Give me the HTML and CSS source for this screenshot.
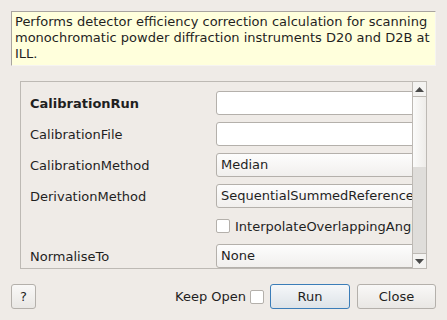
FILE: index.html
```
<!DOCTYPE html>
<html>
<head>
<meta charset="utf-8">
<link rel="stylesheet" href="styles.css">
</head>
<body>
<div class="dialog">
  <div class="desc">Performs detector efficiency correction calculation for scanning monochromatic powder diffraction instruments D20 and D2B at ILL.</div>
  <div class="scroll">
    <div class="viewport">
      <div class="form">
        <div class="label bold">CalibrationRun</div>
        <div class="field input"></div>
        <div class="label">CalibrationFile</div>
        <div class="field input"></div>
        <div class="label">CalibrationMethod</div>
        <div class="field combo">Median</div>
        <div class="label">DerivationMethod</div>
        <div class="field combo">SequentialSummedReferenceDetector</div>
        <div class="label"></div>
        <div class="checkrow"><span class="check"></span><span>InterpolateOverlappingAngles</span></div>
        <div class="label">NormaliseTo</div>
        <div class="field combo">None</div>
      </div>
    </div>
    <div class="vscroll">
      <div class="sbtn up"><svg width="9" height="5" viewBox="0 0 9 5"><polygon points="0,5 9,5 4.5,0" fill="#4a4a4a"/></svg></div>
      <div class="handle"></div>
      <div class="track"></div>
      <div class="sbtn down"><svg width="9" height="5" viewBox="0 0 9 5"><polygon points="0,0 9,0 4.5,5" fill="#4a4a4a"/></svg></div>
    </div>
  </div>
  <div class="buttons">
    <div class="btn help">?</div>
    <div class="spacer"></div>
    <span class="keep">Keep Open</span>
    <span class="check keepcheck"></span>
    <div class="btn run">Run</div>
    <div class="btn close">Close</div>
  </div>
</div>
</body>
</html>
```
FILE: styles.css
```
html, body {
  margin: 0;
  padding: 0;
}
body {
  width: 447px;
  height: 320px;
  overflow: hidden;
  background: #efebe7;
  font-family: "DejaVu Sans", sans-serif;
  font-size: 13px;
  color: #1f1f1f;
}
.dialog {
  display: flex;
  flex-direction: column;
  height: 320px;
}
.desc {
  box-sizing: border-box;
  margin: 11px 11px 0 11px;
  height: 55px;
  padding: 2px 3px 0 3px;
  line-height: 16px;
  background: #ffffdc;
  border-top: 1px solid #a8a49f;
  border-left: 1px solid #a8a49f;
  border-right: 1px solid #f6f4f1;
  border-bottom: 1px solid #f6f4f1;
}
.scroll {
  box-sizing: border-box;
  margin: 15px 20px 0 20px;
  height: 188px;
  border: 1px solid #bdb9b4;
  display: flex;
}
.viewport {
  flex: 1;
  overflow: hidden;
}
.form {
  display: grid;
  grid-template-columns: 186px 240px;
  grid-template-rows: 24px 24px 24px 24px 22px 24px;
  row-gap: 7px;
  padding: 9px 0 0 9px;
  align-items: center;
}
.label {
  white-space: nowrap;
}
.bold {
  font-weight: bold;
}
.field {
  box-sizing: border-box;
  height: 24px;
  border: 1px solid #b4b0ab;
  border-radius: 3px;
  white-space: nowrap;
  overflow: hidden;
  padding-left: 4px;
  line-height: 22px;
}
.input {
  background: #ffffff;
}
.combo {
  background: linear-gradient(#fdfdfd, #f1efed);
}
.checkrow {
  display: flex;
  align-items: center;
  gap: 5px;
  white-space: nowrap;
}
.check {
  box-sizing: border-box;
  display: inline-block;
  width: 14px;
  height: 14px;
  border: 1px solid #b4b0ab;
  border-radius: 2px;
  background: #ffffff;
  flex: none;
}
.vscroll {
  box-sizing: border-box;
  width: 14px;
  border-left: 1px solid #bdb9b4;
  display: flex;
  flex-direction: column;
}
.sbtn {
  height: 14px;
  flex: none;
  background: #f4f3f1;
  display: flex;
  align-items: center;
  justify-content: center;
}
.up {
  border-bottom: 1px solid #bdb9b4;
}
.down {
  border-top: 1px solid #bdb9b4;
}
.handle {
  height: 70px;
  flex: none;
  background: linear-gradient(90deg, #fbfbfa, #eeece9);
}
.track {
  flex: 1;
  background: #dfddda;
}
.buttons {
  display: flex;
  align-items: center;
  margin: 15px 11px 0 11px;
  height: 25px;
}
.spacer {
  flex: 1;
}
.btn {
  box-sizing: border-box;
  height: 25px;
  border: 1px solid #b4b0ab;
  border-radius: 3px;
  background: linear-gradient(#f9f8f7, #e9e7e4);
  display: flex;
  align-items: center;
  justify-content: center;
}
.help {
  width: 25px;
}
.keep {
  margin-right: 4px;
}
.keepcheck {
  margin-right: 6px;
}
.run {
  width: 80px;
  margin-right: 7px;
  border-color: #3b7db8;
  background: linear-gradient(#f5f7f9, #dde3e8);
}
.close {
  width: 79px;
}
```
